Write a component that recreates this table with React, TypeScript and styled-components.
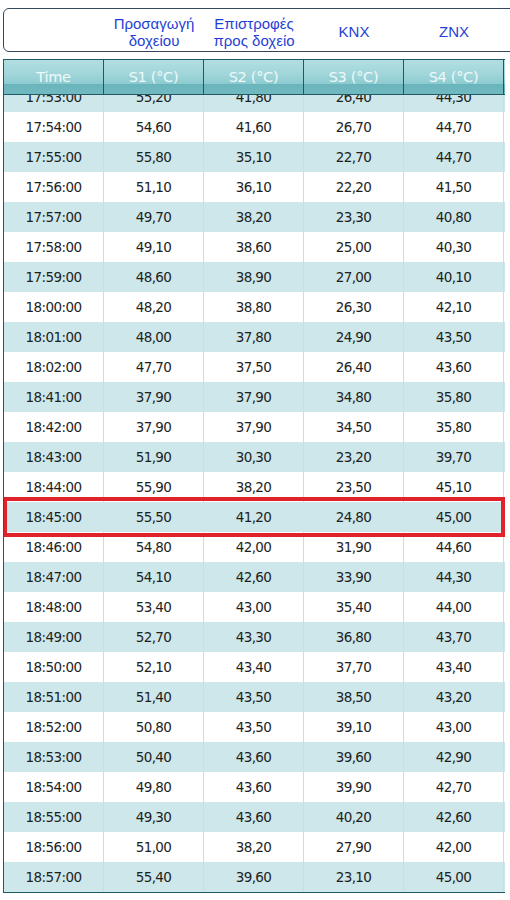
import { useLayoutEffect, useRef } from "react";
import styled, { createGlobalStyle } from "styled-components";

const GlobalStyle = createGlobalStyle`
  html, body {
    margin: 0;
    padding: 0;
    background: #ffffff;
    overflow: hidden;
  }
`;

// time, S1, S2, S3, S4
const rows: string[][] = [
  ["17:53:00", "55,20", "41,80", "26,40", "44,30"],
  ["17:54:00", "54,60", "41,60", "26,70", "44,70"],
  ["17:55:00", "55,80", "35,10", "22,70", "44,70"],
  ["17:56:00", "51,10", "36,10", "22,20", "41,50"],
  ["17:57:00", "49,70", "38,20", "23,30", "40,80"],
  ["17:58:00", "49,10", "38,60", "25,00", "40,30"],
  ["17:59:00", "48,60", "38,90", "27,00", "40,10"],
  ["18:00:00", "48,20", "38,80", "26,30", "42,10"],
  ["18:01:00", "48,00", "37,80", "24,90", "43,50"],
  ["18:02:00", "47,70", "37,50", "26,40", "43,60"],
  ["18:41:00", "37,90", "37,90", "34,80", "35,80"],
  ["18:42:00", "37,90", "37,90", "34,50", "35,80"],
  ["18:43:00", "51,90", "30,30", "23,20", "39,70"],
  ["18:44:00", "55,90", "38,20", "23,50", "45,10"],
  ["18:45:00", "55,50", "41,20", "24,80", "45,00"],
  ["18:46:00", "54,80", "42,00", "31,90", "44,60"],
  ["18:47:00", "54,10", "42,60", "33,90", "44,30"],
  ["18:48:00", "53,40", "43,00", "35,40", "44,00"],
  ["18:49:00", "52,70", "43,30", "36,80", "43,70"],
  ["18:50:00", "52,10", "43,40", "37,70", "43,40"],
  ["18:51:00", "51,40", "43,50", "38,50", "43,20"],
  ["18:52:00", "50,80", "43,50", "39,10", "43,00"],
  ["18:53:00", "50,40", "43,60", "39,60", "42,90"],
  ["18:54:00", "49,80", "43,60", "39,90", "42,70"],
  ["18:55:00", "49,30", "43,60", "40,20", "42,60"],
  ["18:56:00", "51,00", "38,20", "27,90", "42,00"],
  ["18:57:00", "55,40", "39,60", "23,10", "45,00"],
];

const legend = [
  "",
  "Προσαγωγή\nδοχείου",
  "Επιστροφές\nπρος δοχείο",
  "KNX",
  "ZNX",
];

const columns = ["Time", "S1 (°C)", "S2 (°C)", "S3 (°C)", "S4 (°C)"];

const markedTime = "18:45:00";

const App = () => {
  const bodyRef = useRef<HTMLDivElement>(null);

  // list is scrolled a little, first row sits half under the header
  useLayoutEffect(() => {
    if (bodyRef.current) bodyRef.current.scrollTop = 13;
  }, []);

  return (
    <Page>
      <GlobalStyle />
      <LegendBox>
        {legend.map((label, i) => (
          <LegendCell key={i}>{label}</LegendCell>
        ))}
      </LegendBox>

      <Table>
        <HeaderRow>
          {columns.map((c) => (
            <HeaderCell key={c}>{c}</HeaderCell>
          ))}
        </HeaderRow>

        <Body ref={bodyRef}>
          {rows.map((r, i) => (
            <Row key={r[0]} $alt={i % 2 === 0} $marked={r[0] === markedTime}>
              {r.map((v, j) => (
                <Cell key={j}>{v}</Cell>
              ))}
            </Row>
          ))}
        </Body>
      </Table>
    </Page>
  );
};

export default App;

const Page = styled.div`
  width: 510px;
  padding-top: 8px;
  font-family: "DejaVu Sans", Verdana, sans-serif;
`;

const LegendBox = styled.div`
  margin-left: 3px;
  width: 520px;
  height: 44px;
  box-sizing: border-box;
  border: 1px solid #34475a;
  border-radius: 6px;
  display: grid;
  grid-template-columns: repeat(5, 100px);
  align-items: center;
`;

const LegendCell = styled.div`
  white-space: pre-line;
  text-align: center;
  font-family: "Liberation Sans", Arial, sans-serif;
  font-size: 15px;
  line-height: 17px;
  color: #1f3fd6;
  padding-top: 3px;
`;

const Table = styled.div`
  margin: 7px 0 0 3px;
  width: 501px;
  border-left: 1px solid #1d5a62;
  border-bottom: 1px solid #1d5a62;
`;

const HeaderRow = styled.div`
  display: grid;
  grid-template-columns: repeat(5, 100px);
  height: 34px;
  border-top: 1px solid #1d5a62;
  border-bottom: 1px solid #1d5a62;
  background: linear-gradient(
    to bottom,
    #b2dee1 0%,
    #9fd5d9 45%,
    #8ccbd0 70%,
    #6ab5bc 72%,
    #72b9c0 100%
  );
`;

const HeaderCell = styled.div`
  display: flex;
  align-items: center;
  justify-content: center;
  border-right: 1px solid #1d5a62;
  color: #eef9fa;
  font-size: 14.5px;
  letter-spacing: -0.3px;
`;

const Body = styled.div`
  height: 797px;
  overflow-y: auto;
  scrollbar-width: none;
  &::-webkit-scrollbar {
    display: none;
  }
`;

const Row = styled.div<{ $alt: boolean; $marked: boolean }>`
  position: relative;
  z-index: ${(p) => (p.$marked ? 1 : 0)};
  display: grid;
  grid-template-columns: repeat(5, 100px);
  height: 30px;
  background: ${(p) => (p.$alt ? "#cde7ea" : "#ffffff")};

  & > div {
    border-right-color: ${(p) => (p.$marked ? "transparent" : "#d9d9d9")};
  }

  ${(p) =>
    p.$marked &&
    `
    &::after {
      content: "";
      position: absolute;
      left: -1px;
      right: 0;
      top: -5px;
      bottom: -5px;
      border: 4px solid #e0232b;
      pointer-events: none;
    }
  `}
`;

const Cell = styled.div`
  display: flex;
  align-items: center;
  justify-content: center;
  border-right: 1px solid #d9d9d9;
  color: #1e1e1e;
  font-size: 13.5px;
  letter-spacing: -0.6px;
`;
